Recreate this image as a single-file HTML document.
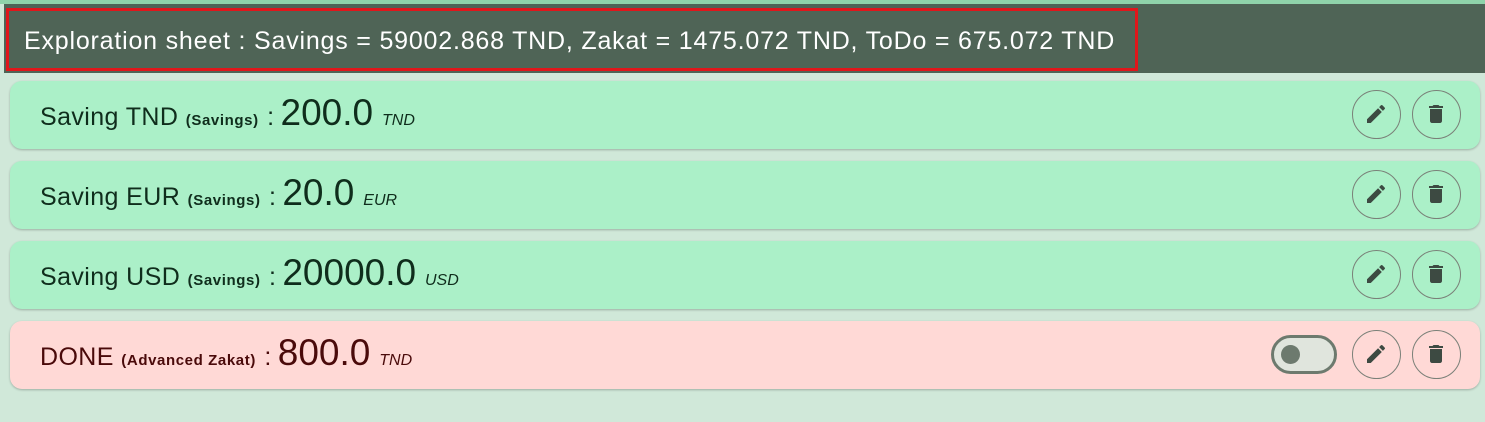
<!DOCTYPE html>
<html><head><style>
body{margin:0;width:1485px;height:422px;background:#d0e8d9;font-family:"Liberation Sans","DejaVu Sans",sans-serif;position:relative;overflow:hidden}
.top{position:absolute;left:0;top:0;width:1485px;height:4px;background:#8fd3aa}
.hdr{position:absolute;left:4px;top:4px;width:1481px;height:69px;background:#4f6456}
.box{position:absolute;left:6px;top:8px;width:1126px;height:57px;border:3px solid #e0161b}
.ht{position:absolute;left:24px;top:26px;color:#fff;font-size:25px;letter-spacing:0.8px;line-height:30px;white-space:nowrap}
.card{position:absolute;left:10px;width:1470px;height:68px;border-radius:12px;background:#abf0c8;box-shadow:0 1px 2px rgba(0,0,0,.25)}
.card.p{background:#ffd9d6}
.t{position:absolute;left:30px;top:12px;white-space:nowrap;color:#0f2d1c;line-height:40px}
.p .t{color:#4a0a0a}
.n{font-size:25px;letter-spacing:0.4px}.s{font-size:15px;font-weight:bold;letter-spacing:0.6px;margin-left:3px}.v{font-size:37px;margin-left:6px}.c{font-size:16px;font-style:italic}
.k{margin-left:4px}
.btn{position:absolute;top:9px;width:47px;height:47px;border:1.5px solid #7a8078;border-radius:50%}
.b1{left:1342px}.b2{left:1402px}
.btn svg{position:absolute;left:11px;top:11px}
.tg{position:absolute;left:1261px;top:14px;width:66px;height:39px;border:3px solid #6d7a6e;border-radius:20px;background:#e0e5dd;box-sizing:border-box}
.tg i{position:absolute;left:7px;top:7px;width:19px;height:19px;border-radius:50%;background:#6d7a6e}
</style></head><body>
<div class="top"></div>
<div class="hdr"></div>
<div class="box"></div>
<div class="ht">Exploration sheet : Savings = 59002.868 TND, Zakat = 1475.072 TND, ToDo = 675.072 TND</div>

<div class="card" style="top:81px"><div class="t"><span class="n">Saving TND</span>&nbsp;<span class="s">(Savings)</span>&nbsp;<span class="n k">:</span><span class="v">200.0</span>&nbsp;&nbsp;<span class="c">TND</span></div>
<div class="btn b1"><svg width="24" height="24" viewBox="0 0 24 24"><path fill="#3d4a42" d="M3 17.25V21h3.75L17.81 9.94l-3.75-3.75L3 17.25zM20.71 7.04a1 1 0 000-1.41l-2.34-2.34a1 1 0 00-1.41 0l-1.83 1.83 3.75 3.75 1.83-1.83z"/></svg></div>
<div class="btn b2"><svg width="24" height="24" viewBox="0 0 24 24"><path fill="#3d4a42" d="M6 19c0 1.1.9 2 2 2h8c1.1 0 2-.9 2-2V7H6v12zM19 4h-3.5l-1-1h-5l-1 1H5v2h14V4z"/></svg></div></div>

<div class="card" style="top:161px"><div class="t"><span class="n">Saving EUR</span>&nbsp;<span class="s">(Savings)</span>&nbsp;<span class="n k">:</span><span class="v">20.0</span>&nbsp;&nbsp;<span class="c">EUR</span></div>
<div class="btn b1"><svg width="24" height="24" viewBox="0 0 24 24"><path fill="#3d4a42" d="M3 17.25V21h3.75L17.81 9.94l-3.75-3.75L3 17.25zM20.71 7.04a1 1 0 000-1.41l-2.34-2.34a1 1 0 00-1.41 0l-1.83 1.83 3.75 3.75 1.83-1.83z"/></svg></div>
<div class="btn b2"><svg width="24" height="24" viewBox="0 0 24 24"><path fill="#3d4a42" d="M6 19c0 1.1.9 2 2 2h8c1.1 0 2-.9 2-2V7H6v12zM19 4h-3.5l-1-1h-5l-1 1H5v2h14V4z"/></svg></div></div>

<div class="card" style="top:241px"><div class="t"><span class="n">Saving USD</span>&nbsp;<span class="s">(Savings)</span>&nbsp;<span class="n k">:</span><span class="v">20000.0</span>&nbsp;&nbsp;<span class="c">USD</span></div>
<div class="btn b1"><svg width="24" height="24" viewBox="0 0 24 24"><path fill="#3d4a42" d="M3 17.25V21h3.75L17.81 9.94l-3.75-3.75L3 17.25zM20.71 7.04a1 1 0 000-1.41l-2.34-2.34a1 1 0 00-1.41 0l-1.83 1.83 3.75 3.75 1.83-1.83z"/></svg></div>
<div class="btn b2"><svg width="24" height="24" viewBox="0 0 24 24"><path fill="#3d4a42" d="M6 19c0 1.1.9 2 2 2h8c1.1 0 2-.9 2-2V7H6v12zM19 4h-3.5l-1-1h-5l-1 1H5v2h14V4z"/></svg></div></div>

<div class="card p" style="top:321px"><div class="t"><span class="n">DONE</span>&nbsp;<span class="s">(Advanced Zakat)</span>&nbsp;<span class="n k">:</span><span class="v">800.0</span>&nbsp;&nbsp;<span class="c">TND</span></div>
<div class="tg"><i></i></div>
<div class="btn b1"><svg width="24" height="24" viewBox="0 0 24 24"><path fill="#3d4a42" d="M3 17.25V21h3.75L17.81 9.94l-3.75-3.75L3 17.25zM20.71 7.04a1 1 0 000-1.41l-2.34-2.34a1 1 0 00-1.41 0l-1.83 1.83 3.75 3.75 1.83-1.83z"/></svg></div>
<div class="btn b2"><svg width="24" height="24" viewBox="0 0 24 24"><path fill="#3d4a42" d="M6 19c0 1.1.9 2 2 2h8c1.1 0 2-.9 2-2V7H6v12zM19 4h-3.5l-1-1h-5l-1 1H5v2h14V4z"/></svg></div></div>
</body></html>
